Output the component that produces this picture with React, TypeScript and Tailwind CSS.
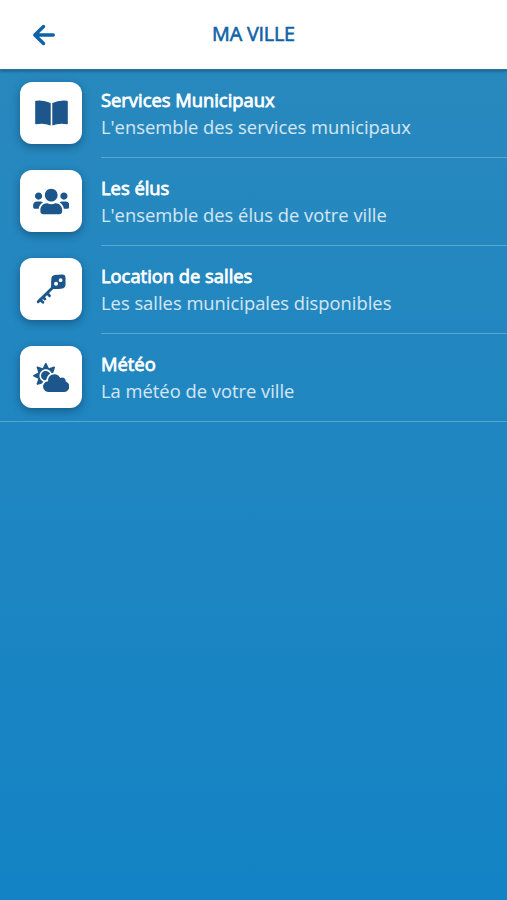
import type { ReactNode } from "react";
import { FaCloudSun, FaUsers } from "react-icons/fa";

type MenuItem = {
  title: string;
  description: string;
  icon: ReactNode;
};

function BookIcon() {
  return (
    <svg viewBox="0 0 33 26" className="h-[26px] w-[33px]" fill="currentColor">
      <path d="M1 .7Q9-.2 15.700 3v22.600Q9 22.800 1 24.300q-.8.1-.8-.7V1.500Q.2.800 1 .7ZM32 .7Q24-.2 17.300 3v22.600q6.700-2.800 14.700-1.300.8.1.8-.7V1.500q0-.7-.8-.8Z" />
    </svg>
  );
}

function KeyIcon() {
  return (
    <svg viewBox="0 0 30 30" className="h-[30px] w-[30px]" fill="none">
      <path
        fillRule="evenodd"
        fill="currentColor"
        d="M18.500.9 26.300.5q3.200 0 3.200 3v7.600q-.1 2.500-2.200 3.200-2.500 1-7 .7h-5.200V8.300l.3-4.300q.5-2.700 3.100-3.100ZM24.600 4.300a1.900 1.900 0 1 0 0 3.800 1.900 1.900 0 0 0 0-3.800ZM20 7.700a2 2 0 1 0 0 4 2 2 0 0 0 0-4Z"
      />
      <g stroke="currentColor" strokeLinecap="round" strokeLinejoin="round">
        <path strokeWidth="2.900" d="M17 13.200 2.200 27.800" />
        <path
          strokeWidth="2.700"
          d="m11.500 19.500 2.100 2.300M7.500 23.500l1.400 1.600M4.300 26l2.600 2.300"
        />
      </g>
    </svg>
  );
}

const items: MenuItem[] = [
  {
    title: "Services Municipaux",
    description: "L'ensemble des services municipaux",
    icon: <BookIcon />,
  },
  {
    title: "Les élus",
    description: "L'ensemble des élus de votre ville",
    icon: <FaUsers className="h-[29px] w-[36.500px]" />,
  },
  {
    title: "Location de salles",
    description: "Les salles municipales disponibles",
    icon: <KeyIcon />,
  },
  {
    title: "Météo",
    description: "La météo de votre ville",
    icon: <FaCloudSun className="h-[29px] w-[36.500px]" />,
  },
];

function Header() {
  return (
    <header className="relative flex h-[70px] items-center justify-center border-b border-[#2f7198] bg-white pb-px text-[#0f62a6] shadow-[0_1px_3px_rgba(0,40,80,0.5)]">
      <button aria-label="Retour" className="absolute top-6 left-8">
        <svg
          viewBox="0 0 24 22"
          className="h-[22px] w-6"
          fill="none"
          stroke="currentColor"
          strokeWidth="3.4"
          strokeLinecap="round"
          strokeLinejoin="round"
        >
          <path d="M11.500 2.500 2.800 11l8.700 8.500M3 11h18.300" />
        </svg>
      </button>
      <h1 className="text-[19.800px] leading-[26px] tracking-[-0.2px] [-webkit-text-stroke:0.6px_currentColor]">
        MA VILLE
      </h1>
    </header>
  );
}

function MenuRow({ title, description, icon }: MenuItem) {
  return (
    <li className="group flex h-[88px] pl-5 last:h-[87px]">
      <div className="mt-3 flex size-[62px] shrink-0 items-center justify-center rounded-[12px] bg-white text-[#1d568a] shadow-[0_3px_8px_rgba(0,30,60,0.4)]">
        {icon}
      </div>
      <div className="ml-[19px] flex-1 border-b border-white/25 pt-4 whitespace-nowrap group-last:border-transparent">
        <h2 className="text-[18.350px] leading-[27px] text-white [-webkit-text-stroke:0.8px_currentColor]">
          {title}
        </h2>
        <p className="text-[18.350px] leading-[27px] text-white/80">
          {description}
        </p>
      </div>
    </li>
  );
}

export default function App() {
  return (
    <main className="flex h-screen flex-col overflow-hidden bg-linear-to-b from-[#2989bd] to-[#1383c5] font-['Open_Sans','Noto_Sans',sans-serif]">
      <Header />
      <ul className="border-b border-white/25">
        {items.map((item) => (
          <MenuRow key={item.title} {...item} />
        ))}
      </ul>
    </main>
  );
}
